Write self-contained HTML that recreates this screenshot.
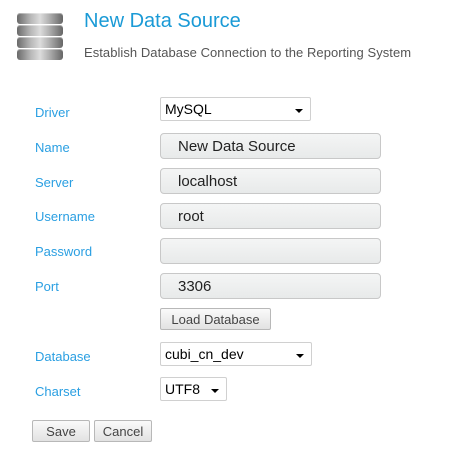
<!DOCTYPE html>
<html><head><style>
*{margin:0;padding:0;box-sizing:border-box}
body{width:474px;height:458px;background:#fff;font-family:"Liberation Sans",Arial,sans-serif;position:relative;overflow:hidden}
.a{position:absolute}
.title{left:84px;top:10px;font-size:20px;color:#1a9ad6}
.sub{left:84px;top:45px;font-size:13px;color:#555;letter-spacing:0.05px}
.lbl{left:35px;font-size:13px;color:#2a9fe2}
.sel{left:160px;height:24px;border:1px solid #d0d0d0;border-radius:2px;background:#fff;font-size:14px;color:#000;padding:3px 0 0 4px}
.sel:after{content:"";position:absolute;right:7px;top:11px;border-left:4px solid transparent;border-right:4px solid transparent;border-top:4px solid #000}
.inp{left:160px;width:221px;height:26px;border:1px solid #c8c8c8;border-radius:4px;background:linear-gradient(#f4f5f5,#e8eaea);font-size:15px;color:#222;padding:4px 0 0 17px}
.btn{height:22px;border:1px solid #b8b8b8;border-radius:2px;background:linear-gradient(#fafafa,#e2e2e2);font-size:13px;color:#444;text-align:center;padding-top:3px}
.slab{position:absolute;left:0;width:46px;height:11px;border-radius:3px;background:linear-gradient(90deg,#6a6a6a,#b8b8b8 30%,#dcdcdc 50%,#b0b0b0 70%,#666);box-shadow:inset 0 1px 0 rgba(255,255,255,.4)}
</style></head><body>
<div class="a" style="left:17px;top:13px;width:46px;height:48px">
<div class="slab" style="top:0"></div><div class="slab" style="top:12px"></div><div class="slab" style="top:24px"></div><div class="slab" style="top:36px"></div>
</div>
<div class="a title">New Data Source</div>
<div class="a sub">Establish Database Connection to the Reporting System</div>

<div class="a lbl" style="top:105px">Driver</div>
<div class="a lbl" style="top:140px">Name</div>
<div class="a lbl" style="top:175px">Server</div>
<div class="a lbl" style="top:209px">Username</div>
<div class="a lbl" style="top:244px">Password</div>
<div class="a lbl" style="top:279px">Port</div>
<div class="a lbl" style="top:349px">Database</div>
<div class="a lbl" style="top:384px">Charset</div>

<div class="a sel" style="top:97px;width:151px">MySQL</div>
<div class="a inp" style="top:133px">New Data Source</div>
<div class="a inp" style="top:168px">localhost</div>
<div class="a inp" style="top:203px">root</div>
<div class="a inp" style="top:238px"></div>
<div class="a inp" style="top:273px">3306</div>
<div class="a btn" style="left:160px;top:308px;width:111px">Load Database</div>
<div class="a sel" style="top:342px;width:152px">cubi_cn_dev</div>
<div class="a sel" style="top:377px;width:67px">UTF8</div>
<div class="a btn" style="left:32px;top:420px;width:58px">Save</div>
<div class="a btn" style="left:94px;top:420px;width:58px">Cancel</div>
</body></html>
